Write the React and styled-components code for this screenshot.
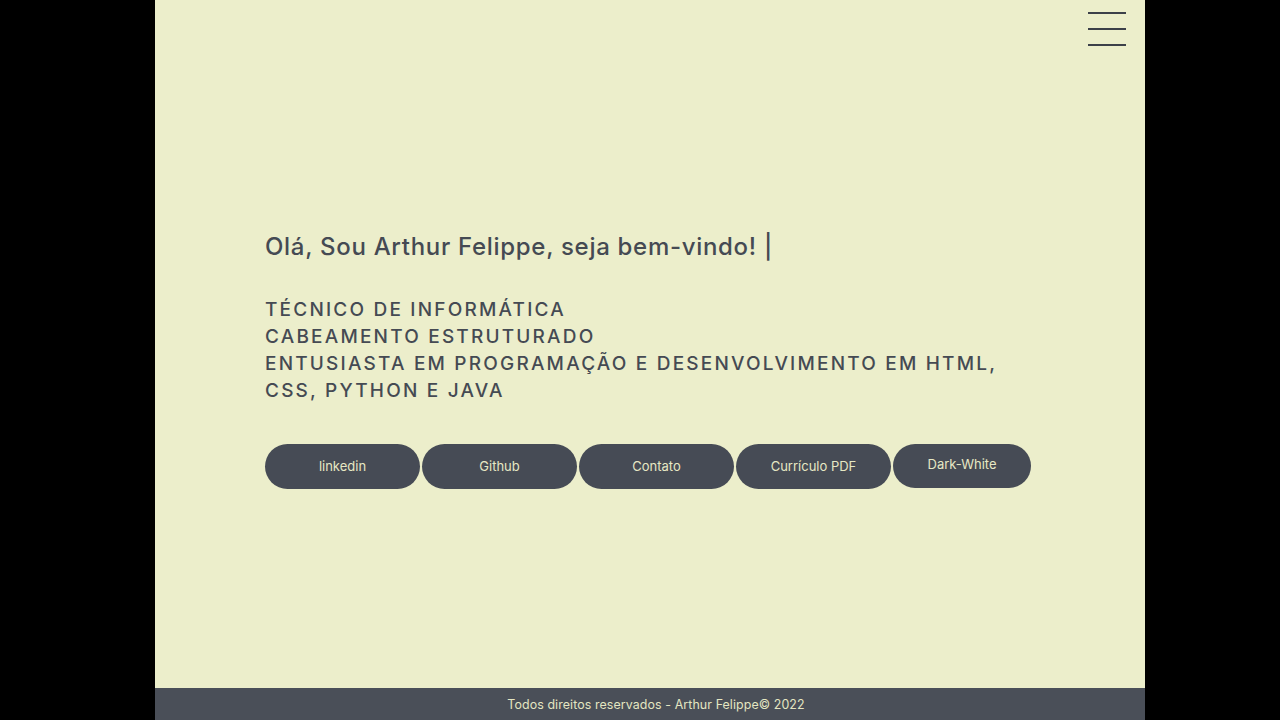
import React from 'react'
import styled, { createGlobalStyle } from 'styled-components'

const Global = createGlobalStyle`
  html, body {
    margin: 0;
    padding: 0;
    background: #000;
    height: 720px;
    overflow: hidden;
  }
`

const Stage = styled.div`
  display: flex;
  height: 720px;
  padding-left: 155px;
`

const Page = styled.div`
  width: 990px;
  height: 720px;
  display: flex;
  flex-direction: column;
  background-color: #eceecb;
  font-family: Inter, "Open Sans", sans-serif;
  color: #444953;
`

const Top = styled.header`
  display: flex;
  justify-content: flex-end;
  padding: 12px 19px 0 0;
  height: 40px;
`

const Burger = styled.button`
  display: flex;
  flex-direction: column;
  justify-content: space-between;
  width: 38px;
  height: 34px;
  padding: 0;
  border: none;
  background: none;

  span {
    display: block;
    height: 2px;
    background: #3c4049;
  }
`

const Main = styled.main`
  flex: 1;
  display: flex;
  flex-direction: column;
  justify-content: center;
  padding: 0 110px 20px;
`

const Title = styled.h1`
  margin: 0 0 35px;
  font-size: 24px;
  font-weight: 500;
  letter-spacing: 0.7px;
  color: #454a53;
`

const Skills = styled.p`
  margin: 0 0 40px;
  max-width: 760px;
  font-size: 19px;
  font-weight: 500;
  line-height: 27px;
  letter-spacing: 2.2px;
  text-transform: uppercase;
  color: #454a53;
`

const Buttons = styled.div`
  display: flex;
  gap: 2px;
`

const Button = styled.a`
  display: flex;
  align-items: center;
  justify-content: center;
  width: ${p => p.$w || 155}px;
  height: ${p => p.$h || 45}px;
  border: none;
  border-radius: 23px;
  background: #464b55;
  color: #e6e8c4;
  font-family: inherit;
  font-size: 13px;
  text-decoration: none;
  padding: 0 0 ${p => (p.$h ? 3 : 0)}px;
  box-sizing: border-box;
`

const Footer = styled.footer`
  height: 32px;
  display: flex;
  align-items: center;
  justify-content: center;
  padding-left: 12px;
  background: #4a4f58;
  color: #e4e6c2;
  font-size: 12.4px;
  letter-spacing: 0.1px;
`

export default function App() {
  return (
    <>
      <Global />
      <Stage>
        <Page>
          <Top>
            <Burger aria-label="menu">
              <span />
              <span />
              <span />
            </Burger>
          </Top>
          <Main>
            <Title>Olá, Sou Arthur Felippe, seja bem-vindo! |</Title>
            <Skills>
              Técnico de Informática<br />
              Cabeamento Estruturado<br />
              Entusiasta em programação e desenvolvimento em HTML, CSS, Python e Java
            </Skills>
            <Buttons>
              <Button href="#">linkedin</Button>
              <Button href="#">Github</Button>
              <Button href="#">Contato</Button>
              <Button href="#">Currículo PDF</Button>
              <Button as="button" $w={138} $h={44}>Dark-White</Button>
            </Buttons>
          </Main>
          <Footer>Todos direitos reservados - Arthur Felippe© 2022</Footer>
        </Page>
      </Stage>
    </>
  )
}
